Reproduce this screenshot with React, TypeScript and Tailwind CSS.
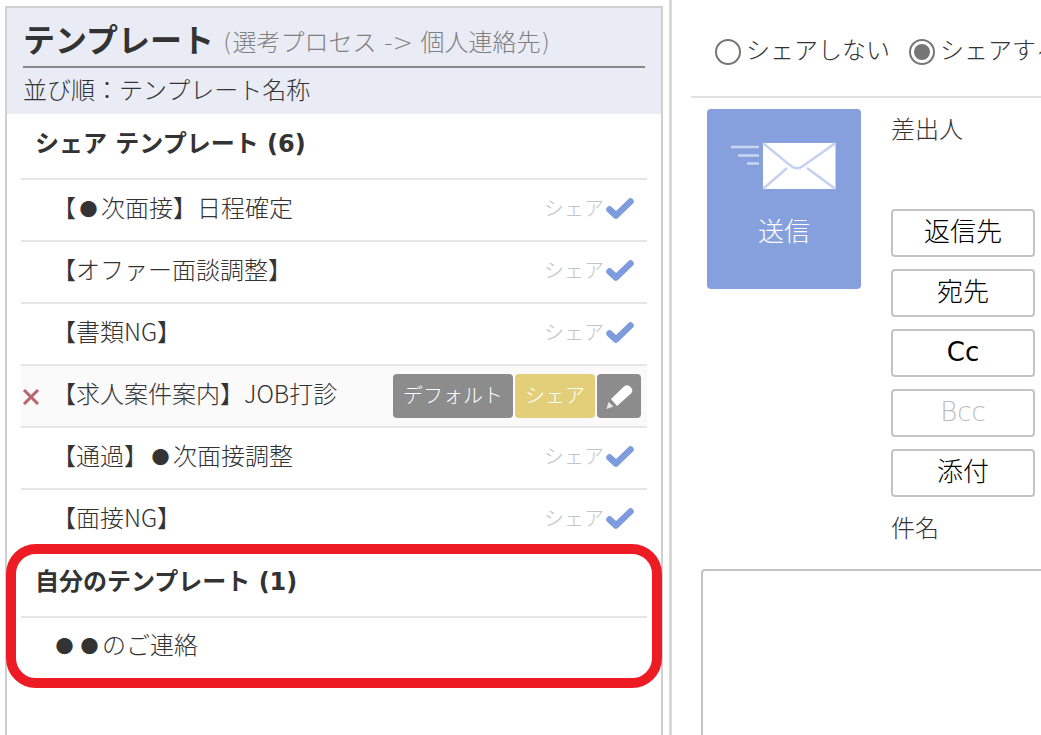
import React from 'react';

const sharedTemplates = [
  '【●次面接】日程確定',
  '【オファー面談調整】',
  '【書類NG】',
  '【求人案件案内】JOB打診',
  '【通過】●次面接調整',
  '【面接NG】',
];

const addressButtons = [
  { label: '返信先', tone: 'text-black font-light' },
  { label: '宛先', tone: 'text-black font-light' },
  { label: 'Cc', tone: 'text-black font-normal' },
  { label: 'Bcc', tone: 'text-[#bdbdbd] font-light' },
  { label: '添付', tone: 'text-black font-light' },
];

// black circles sit in a full-width cell, like the CJK glyph in the original font
function TemplateName({ name }: { name: string }) {
  return (
    <span className="whitespace-pre leading-none pb-[6px] font-['Noto_Sans_CJK_JP']">
      {name.split(/(●)/).map((part, i) =>
        part === '●' ? (
          <span key={i} className="inline-block w-[25px] text-center text-[18px] align-[1px]">●</span>
        ) : (
          <span key={i}>{part}</span>
        )
      )}
    </span>
  );
}

function CheckIcon() {
  return (
    <svg width="28" height="24" viewBox="0 0 28 24" fill="none" className="shrink-0">
      <path d="M3.500 12.500l6.500 6L24.500 4.500" stroke="#7e9bdd" strokeWidth="6.500" strokeLinejoin="round" strokeLinecap="round" />
    </svg>
  );
}

function PencilIcon() {
  return (
    <svg width="30" height="26" viewBox="0 0 30 26" fill="none">
      <path d="M7 16L20 3.500c2-1.800 4-1.800 6 0l1 1c1.800 2 1.800 4 0 6L13 23z" fill="#fff" />
      <path d="M4.500 19l5 4.500-7 2.500z" fill="#fff" opacity="0.8" />
    </svg>
  );
}

function SendIcon() {
  return (
    <svg width="106" height="48" viewBox="0 0 106 48" fill="none">
      <path d="M1 5h28M8 13.500h21M17 21.500h12" stroke="#c9d5f1" strokeWidth="2.500" />
      <rect x="33" y="1" width="72.500" height="46" fill="#fff" />
      <path d="M33 1l28 23c4 3 8 3 12 0L105.500 1M33 47l24-21M105.500 47L77 26" stroke="#c5d2ef" strokeWidth="2.500" />
    </svg>
  );
}

function Radio({ checked }: { checked?: boolean }) {
  return (
    <span className="w-[26px] h-[26px] shrink-0 rounded-full border-2 border-[#767676] bg-white flex items-center justify-center">
      {checked && <span className="w-[16px] h-[16px] rounded-full bg-[#767676]" />}
    </span>
  );
}

export default function App() {
  return (
    <div
      className="relative flex w-[1041px] h-[735px] overflow-hidden bg-white text-[#333] text-[24px] font-light"
      style={{ fontFamily: '"DejaVu Sans", "Noto Sans CJK JP", sans-serif' }}
    >
      {/* Template list */}
      <div className="ml-[5px] mt-[6px] w-[658px] shrink-0 border-2 border-b-0 border-[#d0d0d0]">
        <div className="h-[106px] bg-[#e9ecf5] px-[16px] flex flex-col">
          <div className="h-[60px] border-b-2 border-[#888] flex items-center whitespace-nowrap pt-[8px]">
            <span className="text-[32px] font-bold leading-none">テンプレート</span>
            <span className="ml-[9px] mt-[3px] text-[#808080] leading-none">(選考プロセス -&gt; 個人連絡先)</span>
          </div>
          <div className="flex-1 flex items-center leading-none">並び順：テンプレート名称</div>
        </div>

        <div className="mx-[14px]">
          <div className="h-[64px] flex items-center pl-[14px] pb-[4px] font-bold leading-none">シェア テンプレート (6)</div>
          {sharedTemplates.map((name, i) => (
            <div
              key={name}
              className={`relative h-[62px] border-t-2 border-[#e6e6e6] flex items-center justify-between pl-[31px] ${i === 3 ? 'bg-[#fafafa]' : ''}`}
            >
              <TemplateName name={name} />
              {i === 3 ? (
                <div className="flex items-center gap-[2px] pr-[6px] text-white text-[20px]">
                  <span className="w-[120px] h-[44px] rounded bg-[#8c8c8c] flex items-center justify-center">デフォルト</span>
                  <span className="w-[80px] h-[44px] rounded bg-[#e3cf7a] flex items-center justify-center">シェア</span>
                  <span className="w-[44px] h-[44px] rounded bg-[#8c8c8c] flex items-center justify-center">
                    <PencilIcon />
                  </span>
                </div>
              ) : (
                <div className="flex items-center gap-[2px] pr-[13px] pb-[3px] text-[20px] text-[#c4c4c4] leading-none">
                  シェア
                  <CheckIcon />
                </div>
              )}
              {i === 3 && (
                <svg width="18" height="16" viewBox="0 0 18 16" fill="none" className="absolute left-[1px] top-[23px]">
                  <path d="M2 1l14 14M16 1L2 15" stroke="#b9656e" strokeWidth="3" />
                </svg>
              )}
            </div>
          ))}

          <div className="h-[66px] flex items-center pl-[14px] pb-[2px] font-bold leading-none">自分のテンプレート (1)</div>
          <div className="h-[60px] border-t-2 border-[#e6e6e6] flex items-center pl-[31px]">
            <TemplateName name="●●のご連絡" />
          </div>
        </div>
      </div>

      {/* Mail editor */}
      <div className="ml-[6px] flex-1 min-w-0 border-l-[3px] border-[#d8d8d8] overflow-hidden">
        <div className="ml-[19px] h-[98px] border-b-2 border-[#e0e0e0] flex items-center pl-[24px] pt-[8px] whitespace-nowrap">
          <Radio />
          <span className="ml-[5px] mr-[19px] pb-[2px] leading-none">シェアしない</span>
          <Radio checked />
          <span className="ml-[5px] pb-[2px] leading-none">シェアする</span>
        </div>

        <div className="flex pl-[35px] pt-[11px]">
          <div className="w-[154px] h-[180px] shrink-0 rounded bg-[#86a0dd] flex flex-col items-center text-white">
            <div className="mt-[33px] -ml-[3px]">
              <SendIcon />
            </div>
            <span className="mt-[29px] text-[26px] leading-none">送信</span>
          </div>
          <div className="ml-[30px] w-[144px] shrink-0">
            <div className="h-[100px] leading-[42px]">差出人</div>
            <div className="flex flex-col gap-[12px]">
              {addressButtons.map((b) => (
                <div
                  key={b.label}
                  className={`h-[48px] pb-[2px] rounded border-2 border-[#c4c4c4] flex items-center justify-center text-[26px] leading-none ${b.tone}`}
                >
                  {b.label}
                </div>
              ))}
            </div>
            <div className="mt-[12px] leading-[40px]">件名</div>
          </div>
        </div>

        <div className="ml-[29px] mt-[20px] w-[500px] h-[200px] rounded-sm border-2 border-[#c4c4c4]" />
      </div>

      {/* Callout */}
      <div className="absolute left-[6px] top-[544px] w-[656px] h-[144px] rounded-[30px] border-[10px] border-[#ed1c24]" />
    </div>
  );
}
